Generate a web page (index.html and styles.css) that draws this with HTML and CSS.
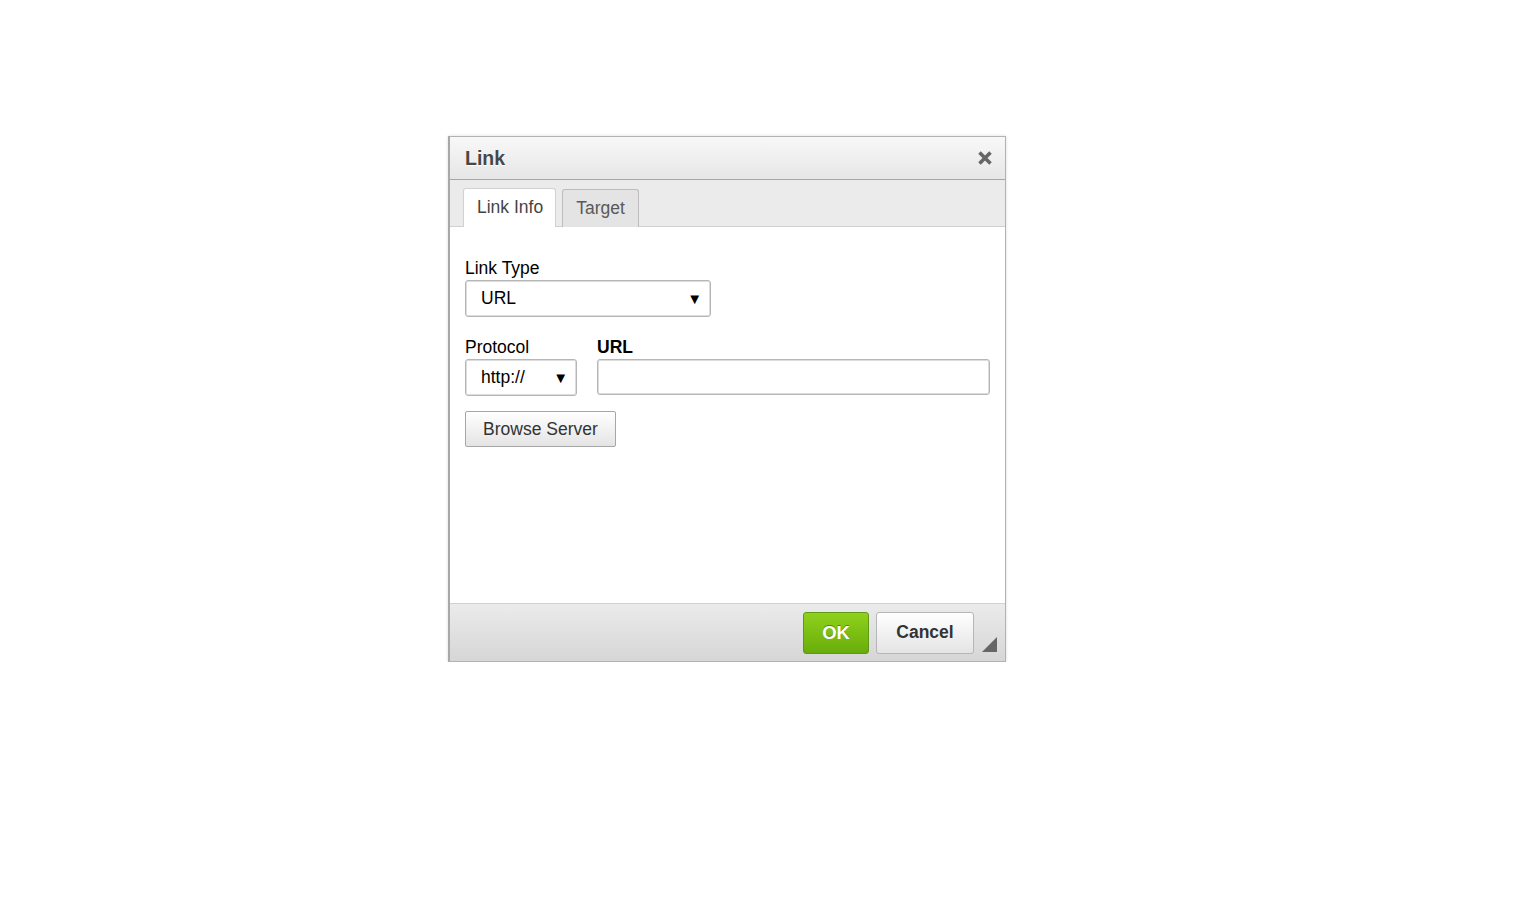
FILE: index.html
```html
<!DOCTYPE html>
<html>
<head>
<meta charset="utf-8">
<link rel="stylesheet" href="styles.css">
</head>
<body>
<div class="dialog">
  <div class="titlebar">
    <span class="title">Link</span>
    <span class="close">
      <svg width="16" height="16" viewBox="0 0 16 16"><path d="M2.5 2.5 L13.5 13.5 M13.5 2.5 L2.5 13.5" stroke="#666" stroke-width="3.6" stroke-linecap="butt"/></svg>
    </span>
  </div>
  <div class="tabs">
    <div class="tab active">Link Info</div>
    <div class="tab">Target</div>
  </div>
  <div class="content">
    <div class="field">
      <label class="label">Link Type</label>
      <div class="select select-type"><span>URL</span><span class="arrow">▼</span></div>
    </div>
    <div class="row">
      <div class="field">
        <label class="label">Protocol</label>
        <div class="select select-proto"><span>http://</span><span class="arrow">▼</span></div>
      </div>
      <div class="field grow">
        <label class="label bold">URL</label>
        <div class="input"></div>
      </div>
    </div>
    <div class="btn browse">Browse Server</div>
  </div>
  <div class="footer">
    <div class="btn ok">OK</div>
    <div class="btn cancel">Cancel</div>
    <span class="resize"></span>
  </div>
</div>
</body>
</html>
```
FILE: styles.css
```css
html, body {
  margin: 0;
  padding: 0;
  background: #fff;
  font-family: "Liberation Sans", Arial, sans-serif;
  color: #000;
}
.dialog {
  position: relative;
  margin: 136px 0 0 448px;
  width: 555px;
  height: 524px;
  border: 1px solid #b2b2b2;
  border-left: 2px solid #a8a8a8;
  box-shadow: 0 0 3px rgba(0,0,0,0.15);
  display: flex;
  flex-direction: column;
  background: #fff;
}
.titlebar {
  height: 43px;
  box-sizing: border-box;
  border-bottom: 1px solid #a6a6a6;
  background: linear-gradient(#f8f8f8, #e6e6e6);
  display: flex;
  align-items: center;
  justify-content: space-between;
  padding: 0 12px 0 15px;
}
.title {
  font-weight: bold;
  font-size: 19.5px;
  color: #474747;
  text-shadow: 0 1px 0 #fff;
}
.close {
  display: flex;
  width: 16px;
  height: 16px;
}
.tabs {
  height: 47px;
  box-sizing: border-box;
  background: #ebebeb;
  border-bottom: 1px solid #d1d1d1;
  display: flex;
  align-items: flex-end;
  padding-left: 13px;
  gap: 6px;
}
.tab {
  height: 38px;
  box-sizing: border-box;
  padding: 0 13px;
  border: 1px solid #bcbcbc;
  border-bottom: none;
  border-radius: 3px 3px 0 0;
  background: #e4e4e4;
  color: #595959;
  font-size: 17.5px;
  display: flex;
  align-items: center;
  margin-bottom: -1px;
}
.tab.active {
  background: #fff;
  border-color: #d1d1d1;
  height: 39px;
  padding: 0 12px 1px 13px;
  color: #444;
}
.content {
  flex: 1;
  padding: 31px 15px 0 15px;
  display: flex;
  flex-direction: column;
}
.field {
  display: flex;
  flex-direction: column;
}
.field.grow {
  flex: 1;
}
.label {
  font-size: 17.5px;
  color: #000;
  line-height: 20px;
  margin-bottom: 2px;
}
.label.bold {
  font-weight: bold;
}
.select {
  box-sizing: border-box;
  height: 37px;
  border: 1px solid #b6b6b6;
  border-radius: 3px;
  box-shadow: inset 0 0 0 1px #dcdcdc;
  display: flex;
  align-items: center;
  justify-content: space-between;
  padding: 0 8px 0 15px;
  font-size: 17.5px;
  color: #000;
}
.select-type {
  width: 246px;
}
.select-proto {
  width: 112px;
}
.arrow {
  font-size: 15px;
}
.row {
  display: flex;
  gap: 20px;
  margin-top: 20px;
}
.input {
  box-sizing: border-box;
  height: 36px;
  width: 393px;
  border: 1px solid #b6b6b6;
  border-radius: 3px;
  box-shadow: inset 0 0 0 1px #dcdcdc;
}
.btn {
  box-sizing: border-box;
  display: flex;
  align-items: center;
  justify-content: center;
  font-size: 17.5px;
  border-radius: 2px;
}
.browse {
  margin-top: 15px;
  width: 151px;
  height: 36px;
  border: 1px solid #a6a6a6;
  background: linear-gradient(#fff, #e4e4e4);
  box-shadow: inset 0 1px 0 #fff;
  color: #333;
  align-self: flex-start;
}
.footer {
  position: relative;
  height: 58px;
  box-sizing: border-box;
  border-top: 1px solid #d1d1d1;
  background: linear-gradient(#ebebeb, #d6d6d6);
  display: flex;
  justify-content: flex-end;
  align-items: center;
  gap: 7px;
  padding: 0 31px 0 0;
}
.ok {
  width: 66px;
  height: 42px;
  border: 1px solid #5f9913;
  border-radius: 3px;
  background: linear-gradient(#8fd11c, #68ad0b);
  color: #fff;
  font-weight: bold;
  font-size: 18.5px;
  text-shadow: 0 -1px 0 #55830c;
}
.cancel {
  width: 98px;
  height: 42px;
  border: 1px solid #b6b6b6;
  border-radius: 3px;
  background: linear-gradient(#fff, #e4e4e4);
  color: #333;
  font-weight: bold;
  font-size: 17.5px;
}
.resize {
  position: absolute;
  right: 8px;
  bottom: 9px;
  width: 0;
  height: 0;
  border-left: 15px solid transparent;
  border-bottom: 15px solid #666;
}
```
